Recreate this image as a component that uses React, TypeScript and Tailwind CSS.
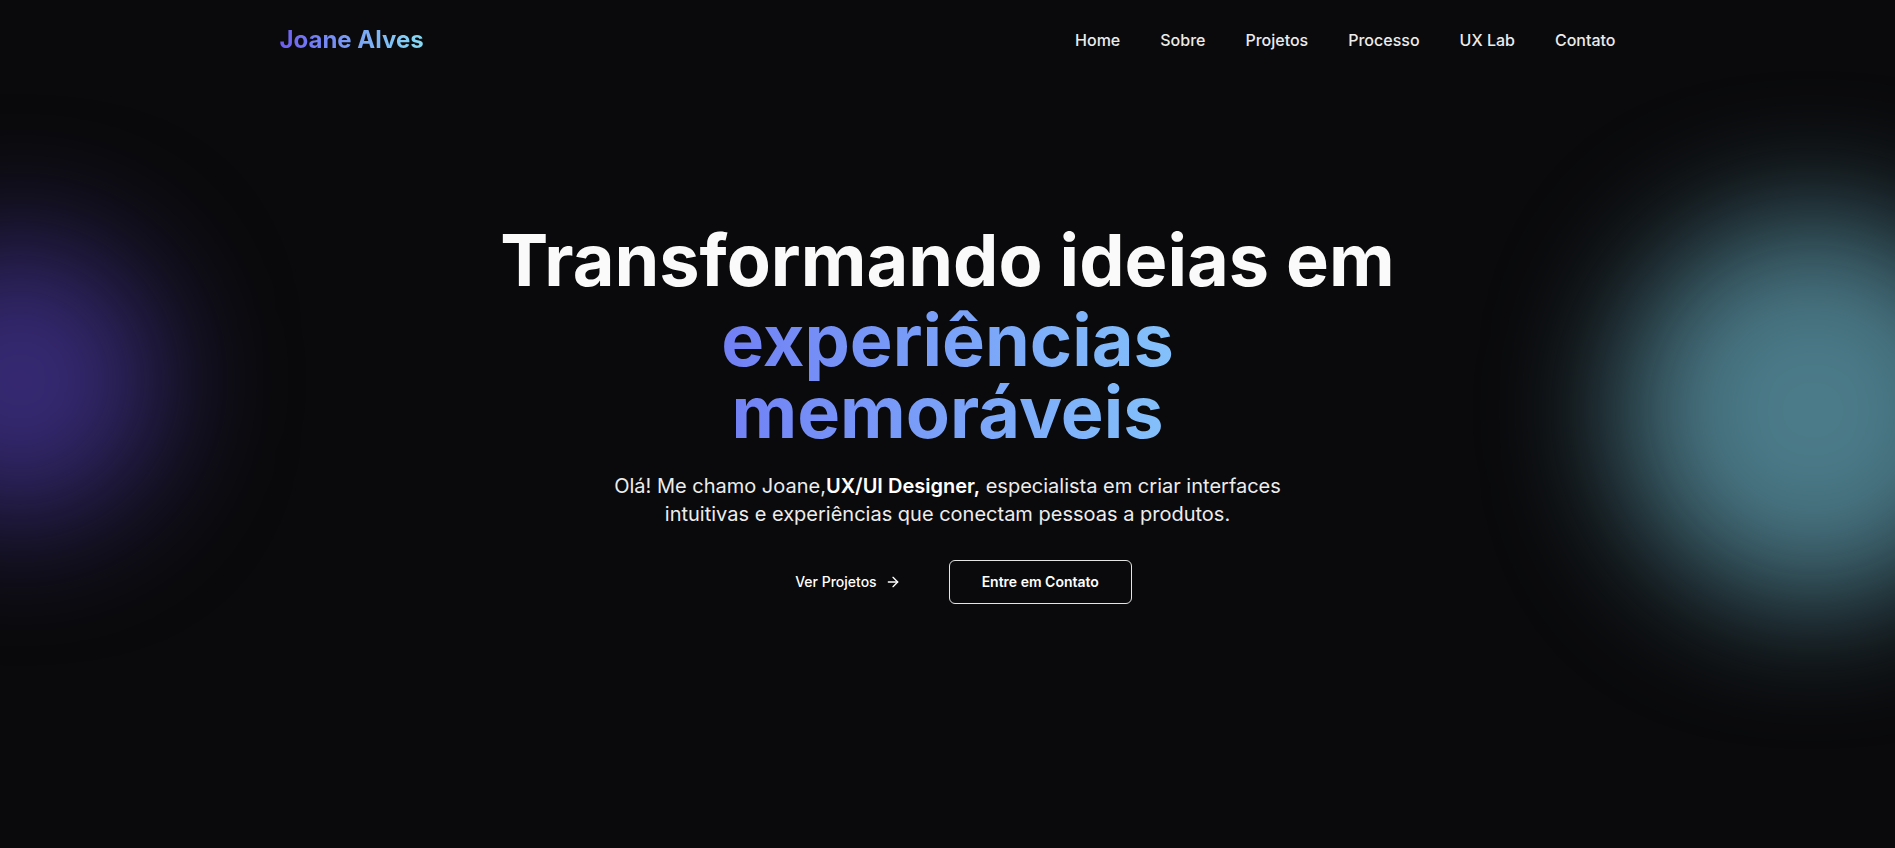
import React from "react";
import { ArrowRight } from "lucide-react";

const links = ["Home", "Sobre", "Projetos", "Processo", "UX Lab", "Contato"];

export default function App() {
  return (
    <div
      className="relative h-[848px] w-full overflow-hidden bg-[#0a0a0c] text-white"
      style={{ fontFamily: "Inter, 'Noto Sans', sans-serif" }}
    >
      {/* glow blobs */}
      <div className="pointer-events-none absolute left-[-120px] top-[240px] h-[280px] w-[280px] rounded-full bg-[#382b78] blur-[64px]" />
      <div className="pointer-events-none absolute left-[1621px] top-[218px] h-[384px] w-[384px] rounded-full bg-[#4b7a88] blur-[64px]" />

      <header className="relative z-10 mx-auto flex h-20 w-full max-w-[1400px] items-center justify-between px-8">
        <span className="bg-gradient-to-r from-[#6e5cf0] to-[#86dcf4] bg-clip-text text-2xl font-bold text-transparent">
          Joane Alves
        </span>
        <nav className="flex items-center gap-10">
          {links.map((l) => (
            <a key={l} className="text-base font-medium text-[#ececec]">
              {l}
            </a>
          ))}
        </nav>
      </header>

      <section className="relative z-10 flex flex-col items-center px-8 pt-[144px] text-center">
        <h1 className="w-full max-w-4xl text-[72px] font-bold leading-none text-[#fafafa]">
          Transformando ideias em
          <span className="mt-2 block bg-gradient-to-r from-[#6a5cf0] to-[#8ee0fc] bg-clip-text text-transparent">
            experiências memoráveis
          </span>
        </h1>
        <p className="mt-6 max-w-2xl text-xl leading-7 text-[#ededed]">
          Olá! Me chamo Joane,<span className="font-semibold text-white">UX/UI Designer,</span> especialista em criar
          interfaces intuitivas e experiências que conectam pessoas a produtos.
        </p>
        <div className="mt-8 flex items-center gap-4">
          <button className="flex h-11 items-center gap-2 rounded-md px-8 text-sm font-medium text-white">
            Ver Projetos
            <ArrowRight className="h-4 w-4" />
          </button>
          <button className="flex h-11 items-center rounded-md border border-[#e5e5e5] px-8 text-sm font-semibold text-white">
            Entre em Contato
          </button>
        </div>
      </section>
    </div>
  );
}
